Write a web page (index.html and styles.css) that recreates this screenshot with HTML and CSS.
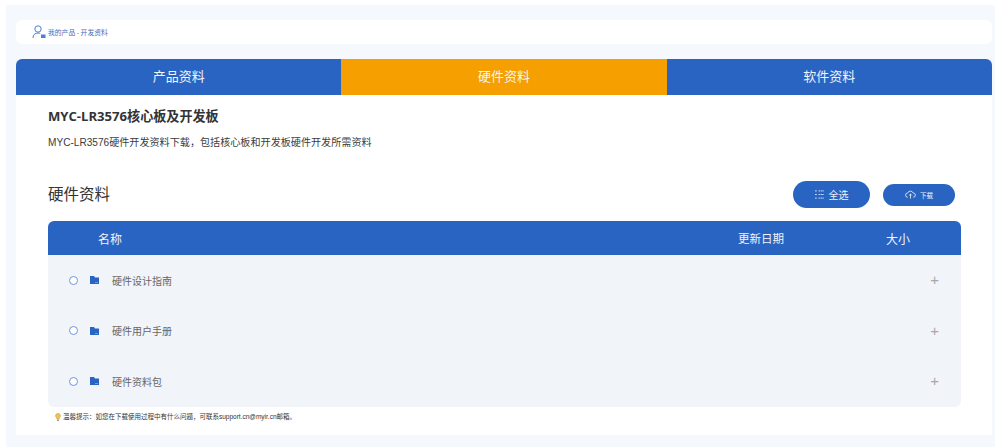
FILE: index.html
```html
<!DOCTYPE html>
<html lang="zh-CN">
<head>
<meta charset="utf-8">
<title>硬件资料</title>
<link rel="stylesheet" href="styles.css">
</head>
<body>
<main class="panel">
  <nav class="crumb">
    <svg class="crumb-icon" viewBox="0 0 14 14" width="14" height="14"><circle cx="6" cy="4" r="3.200" fill="none" stroke="#4f7fd0" stroke-width="1"/><path d="M1 13c0-3.200 2-5 5-5 1 0 1.600.2 2.200.5" fill="none" stroke="#4f7fd0" stroke-width="1"/><rect x="9" y="9.500" width="4.500" height="3.500" fill="#4f7fd0"/></svg>
    <span>我的产品 - 开发资料</span>
  </nav>
  <div class="tabs">
    <div class="tab">产品资料</div>
    <div class="tab tab-active">硬件资料</div>
    <div class="tab">软件资料</div>
  </div>
  <section class="content">
    <h1 class="title">MYC-LR3576核心板及开发板</h1>
    <p class="desc">MYC-LR3576硬件开发资料下载，包括核心板和开发板硬件开发所需资料</p>
    <div class="head-row">
      <h2 class="sub">硬件资料</h2>
      <div class="actions">
        <button class="btn btn-all"><svg viewBox="0 0 10 10" width="9" height="9"><path d="M0 1h2M0 5h2M0 9h2M4 1h6M4 5h6M4 9h6" stroke="#dfe8f8" stroke-width="1" fill="none" stroke-dasharray="2 .6"/></svg>全选</button>
        <button class="btn btn-down"><svg viewBox="0 0 12 10" width="11" height="9"><path d="M3 8H2.800A2.300 2.300 0 0 1 2.800 3.400 3.300 3.300 0 0 1 9 3.400 2.300 2.300 0 0 1 9.200 8H9M6 4.500V9.500M4.500 6 6 4.500 7.500 6" fill="none" stroke="#eef3fb" stroke-width=".9"/></svg>下载</button>
      </div>
    </div>
    <div class="table">
      <div class="thead">
        <span class="th-name">名称</span>
        <span class="th-date">更新日期</span>
        <span class="th-size">大小</span>
      </div>
      <div class="row">
        <i class="radio"></i>
        <svg class="folder" viewBox="0 0 9 8" width="9" height="8"><path d="M0 0h4l1 1.500h4V8H0z" fill="#2a64c2"/><path d="M5 6.500h3" stroke="#9db9e6" stroke-width=".6"/></svg>
        <span class="name">硬件设计指南</span>
        <span class="plus">+</span>
      </div>
      <div class="row">
        <i class="radio"></i>
        <svg class="folder" viewBox="0 0 9 8" width="9" height="8"><path d="M0 0h4l1 1.500h4V8H0z" fill="#2a64c2"/><path d="M5 6.500h3" stroke="#9db9e6" stroke-width=".6"/></svg>
        <span class="name">硬件用户手册</span>
        <span class="plus">+</span>
      </div>
      <div class="row">
        <i class="radio"></i>
        <svg class="folder" viewBox="0 0 9 8" width="9" height="8"><path d="M0 0h4l1 1.500h4V8H0z" fill="#2a64c2"/><path d="M5 6.500h3" stroke="#9db9e6" stroke-width=".6"/></svg>
        <span class="name">硬件资料包</span>
        <span class="plus">+</span>
      </div>
    </div>
    <p class="tip">
      <svg viewBox="0 0 6 10" width="6" height="9"><path d="M3 .5A2.600 2.600 0 0 1 4.500 5.300L4.200 7H1.800L1.500 5.300A2.600 2.600 0 0 1 3 .5z" fill="#f1c34e" stroke="#a98a3c" stroke-width=".5"/><path d="M2 8.300h2" stroke="#777" stroke-width="1"/></svg>
      <span>温馨提示：如您在下载使用过程中有什么问题，可联系support.cn@myir.cn邮箱。</span>
    </p>
  </section>
</main>
</body>
</html>
```

FILE: styles.css
```css
* { box-sizing: border-box; }
html, body { margin: 0; height: 447px; overflow: hidden; background: #fff; }
body { padding: 5px 2px 0 6px; font-family: "Noto Sans CJK SC", "Liberation Sans", sans-serif; }

.panel { background: #f5f8fd; height: 442px; padding: 15px 3px 0 10px; }

.crumb { height: 24px; margin-bottom: 15px; background: #fff; border-radius: 6px; padding-left: 16px; display: flex; align-items: center; gap: 2px; font-size: 6.800px; color: #3f6fbe; }
.crumb-icon { flex: none; }

.tabs { display: flex; height: 36px; border-radius: 6px 6px 0 0; overflow: hidden; }
.tab { flex: 1; background: #2a64c2; color: #f0f4fb; font-size: 13px; line-height: 34px; display: flex; align-items: flex-start; justify-content: center; }
.tab-active { background: #f59f00; }

.content { background: #fff; height: 340px; padding: 10px 31px 0 32px; color: #333; }
.title { margin: 0; font-family: "Open Sans", "Noto Sans CJK SC", sans-serif; font-size: 13.100px; line-height: 22px; font-weight: 700; color: #333; }
.desc { margin: 7px 0 0; font-size: 10.100px; line-height: 17px; font-family: "Liberation Sans", "Noto Sans CJK SC", sans-serif; color: #3c3c3c; }

.head-row { display: flex; justify-content: space-between; align-items: flex-start; margin-top: 25px; height: 45px; }
.sub { margin: 5px 0 0; font-size: 15.500px; line-height: 24px; font-weight: 400; color: #333; }
.actions { display: flex; gap: 13px; align-items: center; padding: 5px 6px 0 0; }
.btn { border: 0; background: #2a64c2; color: #eef3fb; font-family: inherit; display: flex; align-items: center; justify-content: center; padding: 0; }
.btn-all { width: 77px; height: 27px; border-radius: 14px; font-size: 10px; gap: 5px; }
.btn-down { width: 72px; height: 22px; border-radius: 11px; font-size: 6.500px; gap: 4px; }

.table { background: #f1f4f9; border-radius: 6px; height: 186px; overflow: hidden; }
.thead { height: 34px; background: #2a64c2; color: #f0f4fb; font-size: 12px; display: flex; align-items: center; padding-left: 50px; }
.th-name { flex: 1; }
.th-date { width: 48px; margin-right: 101px; padding-left: 1px; font-size: 11.500px; }
.th-size { width: 24px; margin-right: 51px; }

.row { height: 50.500px; display: flex; align-items: center; padding: 0 22px 0 21px; font-size: 10px; color: #666; }
.radio { width: 9px; height: 9px; border: 1px solid #6f96dc; border-radius: 50%; background: #fff; flex: none; margin-right: 12px; }
.folder { flex: none; margin-right: 13px; }
.name { flex: 1; }
.plus { font-size: 15px; color: #a8a8a8; font-family: "Liberation Sans", sans-serif; line-height: 14px; }

.tip { margin: 5px 0 0 7px; display: flex; align-items: center; gap: 2px; font-family: "Liberation Sans", "Noto Sans CJK SC", sans-serif; font-size: 6.500px; line-height: 10px; color: #333; }
.tip svg { flex: none; }
```
